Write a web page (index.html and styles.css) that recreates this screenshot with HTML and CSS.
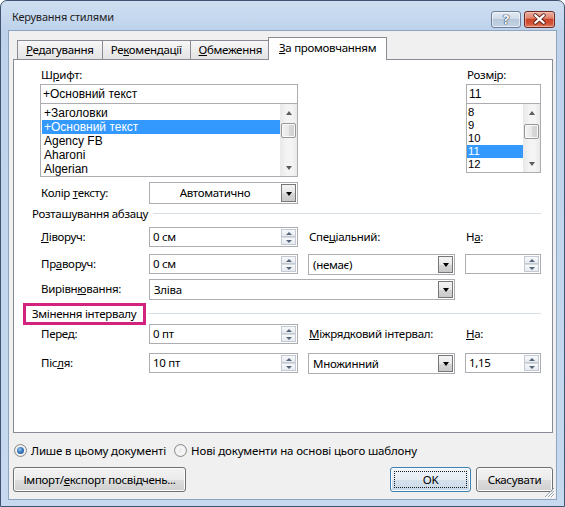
FILE: index.html
```html
<!DOCTYPE html>
<html lang="uk">
<head>
<meta charset="utf-8">
<title>Керування стилями</title>
<link rel="stylesheet" href="styles.css">
</head>
<body>
<div class="window">
  <div class="titlebar">
    <span class="title">Керування стилями</span>
    <div class="caption">
      <span class="cap help">?</span>
      <span class="cap close">
        <svg width="31" height="17" viewBox="0 0 31 17">
          <path d="M11 4 L20 12 M20 4 L11 12" stroke="#5a1f17" stroke-width="4.2" stroke-linecap="round" fill="none"/>
          <path d="M11 4 L20 12 M20 4 L11 12" stroke="#ffffff" stroke-width="2.4" stroke-linecap="round" fill="none"/>
        </svg>
      </span>
    </div>
  </div>

  <div class="client">
    <div class="tabs">
      <span class="tab"><u>Р</u>едагування</span>
      <span class="tab">Ре<u>к</u>омендації</span>
      <span class="tab"><u>О</u>бмеження</span>
      <span class="tab active"><u>З</u>а промовчанням</span>
    </div>

    <div class="panel">
      <div class="font-block">
        <div class="font-col">
          <div class="top-label">Ш<u>р</u>ифт:</div>
          <div class="textbox">+Основний текст</div>
          <div class="listbox font-list">
            <div class="items">
              <div class="item">+Заголовки</div>
              <div class="item selected">+Основний текст</div>
              <div class="item">Agency FB</div>
              <div class="item">Aharoni</div>
              <div class="item">Algerian</div>
            </div>
            <div class="scrollbar">
              <span class="sb-btn"><i class="tri-up"></i></span>
              <span class="sb-track"><span class="thumb"></span></span>
              <span class="sb-btn"><i class="tri-down"></i></span>
            </div>
          </div>
        </div>
        <div class="size-col">
          <div class="top-label">Розм<u>і</u>р:</div>
          <div class="textbox">11</div>
          <div class="listbox size-list">
            <div class="items">
              <div class="item">8</div>
              <div class="item">9</div>
              <div class="item">10</div>
              <div class="item selected">11</div>
              <div class="item">12</div>
            </div>
            <div class="scrollbar">
              <span class="sb-btn"><i class="tri-up"></i></span>
              <span class="sb-track"><span class="thumb"></span></span>
              <span class="sb-btn"><i class="tri-down"></i></span>
            </div>
          </div>
        </div>
      </div>

      <div class="frow color-row">
        <span class="lbl">Колір <u>т</u>ексту:</span>
        <div class="combo centered"><span class="val">Автоматично</span><span class="drop"><i class="tri-drop"></i></span></div>
      </div>

      <div class="group-head first"><span class="gtext">Розташування абзацу</span><span class="gline"></span></div>

      <div class="frow r-left">
        <span class="lbl"><u>Л</u>іворуч:</span>
        <div class="spin"><span class="val">0 см</span><span class="arrows"><span class="ab"><i class="sp-up"></i></span><span class="ab"><i class="sp-down"></i></span></span></div>
        <span class="lbl">Спе<u>ц</u>іальний:</span>
        <span class="lbl">Н<u>а</u>:</span>
      </div>

      <div class="frow r-right">
        <span class="lbl">Пр<u>а</u>воруч:</span>
        <div class="spin"><span class="val">0 см</span><span class="arrows"><span class="ab"><i class="sp-up"></i></span><span class="ab"><i class="sp-down"></i></span></span></div>
        <div class="combo"><span class="val">(немає)</span><span class="drop"><i class="tri-drop"></i></span></div>
        <div class="spin"><span class="val"></span><span class="arrows"><span class="ab"><i class="sp-up"></i></span><span class="ab"><i class="sp-down"></i></span></span></div>
      </div>

      <div class="frow r-align">
        <span class="lbl">Вирівн<u>ю</u>вання:</span>
        <div class="combo wide"><span class="val">Зліва</span><span class="drop"><i class="tri-drop"></i></span></div>
      </div>

      <div class="group-head second"><span class="gtext marked">Змінення інтервалу</span><span class="gline"></span></div>

      <div class="frow r-before">
        <span class="lbl">Пере<u>д</u>:</span>
        <div class="spin"><span class="val">0 пт</span><span class="arrows"><span class="ab"><i class="sp-up"></i></span><span class="ab"><i class="sp-down"></i></span></span></div>
        <span class="lbl"><u>М</u>іжрядковий інтервал:</span>
        <span class="lbl"><u>Н</u>а:</span>
      </div>

      <div class="frow r-after">
        <span class="lbl">Піс<u>л</u>я:</span>
        <div class="spin"><span class="val">10 пт</span><span class="arrows"><span class="ab"><i class="sp-up"></i></span><span class="ab"><i class="sp-down"></i></span></span></div>
        <div class="combo"><span class="val">Множинний</span><span class="drop"><i class="tri-drop"></i></span></div>
        <div class="spin"><span class="val">1,15</span><span class="arrows"><span class="ab"><i class="sp-up"></i></span><span class="ab"><i class="sp-down"></i></span></span></div>
      </div>
    </div>

    <div class="radios">
      <span class="radio checked"></span><span class="rtext">Лише в цьому документі</span>
      <span class="radio second"></span><span class="rtext">Нові документи на основі цього шаблону</span>
    </div>

    <div class="buttons">
      <span class="btn import">Імпорт/<u>е</u>кспорт посвідчень...</span>
      <span class="spacer"></span>
      <span class="btn ok"><span class="focus">OK</span></span>
      <span class="btn cancel">Скасувати</span>
    </div>

    <svg class="grip" width="12" height="12" viewBox="0 0 12 12">
      <path d="M11 2 L2 11 M11 5 L5 11 M11 8 L8 11" stroke="#9aa7b6" stroke-width="1" fill="none"/>
      <path d="M12 3 L3 12 M12 6 L6 12 M12 9 L9 12" stroke="#ffffff" stroke-width="1" fill="none"/>
    </svg>
  </div>
</div>
</body>
</html>
```

FILE: styles.css
```css
* { box-sizing: border-box; }

html, body { margin: 0; padding: 0; }

body {
  width: 565px;
  height: 507px;
  overflow: hidden;
  background: #ffffff;
  font-family: "Noto Sans", "Open Sans", sans-serif;
  font-size: 11.5px;
  letter-spacing: -0.3px;
  color: #000;
}

u { text-underline-offset: 1px; }

/* ---------- window frame ---------- */
.window {
  width: 565px;
  height: 507px;
  border: 1px solid #3e5470;
  border-radius: 7px 7px 0 0;
  background: linear-gradient(180deg, #cfdff2 0, #bed3eb 28px, #c2d6ed 60%, #c6d9ee 100%);
  padding: 0 7px 6px;
  display: flex;
  flex-direction: column;
}

.titlebar {
  height: 29px;
  flex: none;
  display: flex;
  justify-content: space-between;
  align-items: flex-start;
  padding: 8px 2px 0 4px;
}

.title {
  line-height: 16px;
  font-size: 11px;
  letter-spacing: -0.2px;
  color: #1e1e1e;
}

.caption {
  display: flex;
  gap: 3px;
  margin-top: 2px;
}

.cap {
  height: 17px;
  border-radius: 3px;
  display: flex;
  align-items: center;
  justify-content: center;
}

.help {
  width: 30px;
  border: 1px solid #6e8097;
  background: linear-gradient(180deg, #e3ebf4 0, #cfdbe9 45%, #b7c8dc 50%, #c3d3e5 100%);
  box-shadow: inset 0 0 0 1px rgba(255,255,255,0.55);
  color: #ffffff;
  font-weight: bold;
  font-size: 13px;
  line-height: 15px;
  letter-spacing: 0;
  text-shadow: 0 0 1px #243850, 0 0 1px #243850, 0 0 1px #243850;
}

.close {
  width: 31px;
  border: 1px solid #6b2a22;
  background: linear-gradient(180deg, #ecae9f 0, #df8770 40%, #cc4429 50%, #d2553a 80%, #e28a6c 100%);
  box-shadow: inset 0 0 0 1px rgba(255,220,210,0.45);
}

.close svg { display: block; }

/* ---------- client area ---------- */
.client {
  position: relative;
  flex: 1;
  border: 1px solid #8ea5c1;
  background: #f0f0f0;
  padding: 6px 3px 0 4px;
  display: flex;
  flex-direction: column;
}

.tabs {
  height: 22px;
  display: flex;
  align-items: flex-end;
  padding-left: 4px;
}

.tab {
  height: 19px;
  line-height: 18px;
  padding: 0 8px;
  margin-right: -1px;
  border: 1px solid #898c95;
  border-bottom: none;
  background: linear-gradient(180deg, #f7f7f7 0, #ececec 55%, #e3e3e3 100%);
  white-space: nowrap;
}

.tab.active {
  position: relative;
  z-index: 1;
  height: 23px;
  line-height: 20px;
  margin: 0 -2px -1px -2px;
  padding: 0 10px;
  background: #ffffff;
}

.panel {
  width: 540px;
  height: 374px;
  flex: none;
  border: 1px solid #898c95;
  background: #ffffff;
  padding: 7px 11px 0 26px;
}

/* ---------- font block ---------- */
.font-block {
  display: flex;
  gap: 168px;
  align-items: flex-start;
}

.font-col { width: 258px; }
.size-col { width: 75px; }

.top-label {
  height: 17px;
  line-height: 16px;
  padding-left: 1px;
}

.textbox {
  height: 20px;
  border: 1px solid #abadb3;
  background: #fff;
  font-family: "Liberation Sans", Arial, sans-serif;
  font-size: 12px;
  letter-spacing: 0;
  line-height: 18px;
  padding-left: 2px;
}

.listbox {
  display: flex;
  border: 1px solid #abadb3;
  border-top: none;
  background: #fff;
  font-family: "Liberation Sans", Arial, sans-serif;
  letter-spacing: 0;
}

.font-list { height: 73px; font-size: 12px; }
.size-list { height: 69px; font-size: 11.3px; }

.items {
  flex: 1;
  padding-top: 2px;
  overflow: hidden;
}

.font-list .item {
  height: 14px;
  line-height: 14px;
  margin-left: 1px;
  padding-left: 2px;
  white-space: nowrap;
}

.size-list .item {
  height: 13px;
  line-height: 13px;
  padding-left: 1px;
}

.item.selected {
  background: #3399ff;
  color: #ffffff;
}

.scrollbar {
  width: 17px;
  display: flex;
  flex-direction: column;
  background: linear-gradient(90deg, #e8e8e8 0, #f4f4f4 40%, #f4f4f4 70%, #e9e9e9 100%);
}

.sb-btn {
  height: 17px;
  flex: none;
  display: flex;
  align-items: center;
  justify-content: center;
}

.sb-track { flex: 1; }

.thumb {
  display: block;
  width: 15px;
  height: 15px;
  margin: 2px 0 0 1px;
  border: 1px solid #979797;
  border-radius: 2px;
  background: linear-gradient(90deg, #f3f3f3 0, #e8e8e8 50%, #d9d9d9 51%, #d0d0d0 100%);
  box-shadow: inset 0 0 0 1px #fafafa;
}

.size-list .thumb { margin-top: 3px; }

.tri-up, .tri-down {
  display: block;
  width: 0;
  height: 0;
  border-left: 3.5px solid transparent;
  border-right: 3.5px solid transparent;
}
.tri-up { border-bottom: 4px solid #5b5b5b; }
.tri-down { border-top: 4px solid #5b5b5b; }

/* ---------- form rows ---------- */
.frow {
  display: grid;
  grid-template-columns: 99px 149px 147px 76px;
  column-gap: 10px;
  align-items: center;
}

.lbl {
  padding-left: 1px;
  white-space: nowrap;
  transform: translateY(-1px);
}

.color-row { height: 22px; margin-top: 5px; }
.r-left { height: 20px; margin-top: 6px; }
.r-right { height: 21px; margin-top: 7px; }
.r-align { height: 21px; margin-top: 4px; }
.r-before { height: 20px; margin-top: 3px; }
.r-after { height: 21px; margin-top: 9px; }

.combo {
  height: 21px;
  display: flex;
  border: 1px solid #abadb3;
  background: #fff;
}

.color-row .combo { height: 22px; }

.combo .val {
  flex: 1;
  line-height: 19px;
  padding-left: 4px;
  white-space: nowrap;
}

.combo.centered .val {
  text-align: center;
  padding-left: 0;
}

.combo.wide { grid-column: 2 / span 2; }

.drop {
  width: 15px;
  margin: 1px;
  border: 1px solid #777777;
  background: linear-gradient(180deg, #f4f4f4 0, #e8e8e8 50%, #d6d6d6 51%, #cacaca 100%);
  display: flex;
  align-items: center;
  justify-content: center;
}

.tri-drop {
  display: block;
  width: 0;
  height: 0;
  border-left: 3.5px solid transparent;
  border-right: 3.5px solid transparent;
  border-top: 4px solid #000;
  margin-top: 1px;
}

.spin {
  height: 20px;
  align-self: start;
  display: flex;
  border: 1px solid #abadb3;
  background: #fff;
}

.spin .val {
  flex: 1;
  line-height: 18px;
  padding-left: 3px;
}

.arrows {
  width: 15px;
  margin: 1px 1px 1px 0;
  display: flex;
  flex-direction: column;
}

.ab {
  flex: 1;
  border: 1px solid #c3cad3;
  background: linear-gradient(180deg, #f8f9fb 0, #e6eaef 100%);
  display: flex;
  align-items: center;
  justify-content: center;
}

.ab + .ab { border-top-color: #d4d9df; }

.sp-up, .sp-down {
  display: block;
  width: 0;
  height: 0;
  border-left: 3px solid transparent;
  border-right: 3px solid transparent;
}
.sp-up { border-bottom: 3px solid #56667a; }
.sp-down { border-top: 3px solid #56667a; }

/* ---------- group headers ---------- */
.group-head {
  display: flex;
  align-items: center;
  margin-left: -8px;
  height: 15px;
}

.group-head.first { margin-top: 2px; }
.group-head.second { margin-top: 5px; height: 16px; }

.gtext {
  position: relative;
  white-space: nowrap;
  line-height: 15px;
}

.gline {
  flex: 1;
  margin-left: 5px;
  border-top: 1px solid #d5dfe5;
}

.second .gline { margin-left: 12px; }

.gtext.marked::after {
  content: "";
  position: absolute;
  left: -9px;
  right: -10px;
  top: -3px;
  bottom: -4px;
  border: 3px solid #d4237e;
}

/* ---------- radios ---------- */
.radios {
  height: 16px;
  margin-top: 9px;
  padding-left: 1px;
  display: flex;
  align-items: center;
  letter-spacing: -0.15px;
}

.radio {
  width: 13px;
  height: 13px;
  flex: none;
  border-radius: 50%;
  border: 1px solid #8b8b8b;
  background: radial-gradient(circle at 50% 50%, #e9e9e9 0, #f6f6f6 45%, #dcdcdc 100%);
  position: relative;
}

.radio.checked::after {
  content: "";
  position: absolute;
  left: 2px;
  top: 2px;
  width: 7px;
  height: 7px;
  border-radius: 50%;
  background: radial-gradient(circle at 40% 35%, #9ccaf3 0, #3a79c0 45%, #1c4f88 100%);
}

.radio.second { margin-left: 8px; }

.rtext {
  margin-left: 4px;
  white-space: nowrap;
}

/* ---------- buttons ---------- */
.buttons {
  height: 25px;
  margin-top: 9px;
  display: flex;
}

.btn {
  height: 25px;
  border: 1px solid #707070;
  border-radius: 3px;
  background: linear-gradient(180deg, #f2f2f2 0, #ebebeb 50%, #dddddd 51%, #cfcfcf 100%);
  box-shadow: inset 0 0 0 1px #fbfbfb;
  display: flex;
  align-items: center;
  justify-content: center;
  white-space: nowrap;
}

.import { width: 173px; }
.spacer { flex: 1; }
.ok {
  width: 81px;
  border-color: #3c7fb1;
  background: linear-gradient(180deg, #f0f5fa 0, #e6edf4 50%, #d5e1ec 51%, #cad9e8 100%);
  padding: 3px;
}
.ok .focus {
  width: 100%;
  height: 100%;
  border: 1px dotted #1a1a1a;
  display: flex;
  align-items: center;
  justify-content: center;
}
.cancel { width: 77px; margin-left: 5px; }

.grip {
  position: absolute;
  right: 1px;
  bottom: 1px;
}
```
